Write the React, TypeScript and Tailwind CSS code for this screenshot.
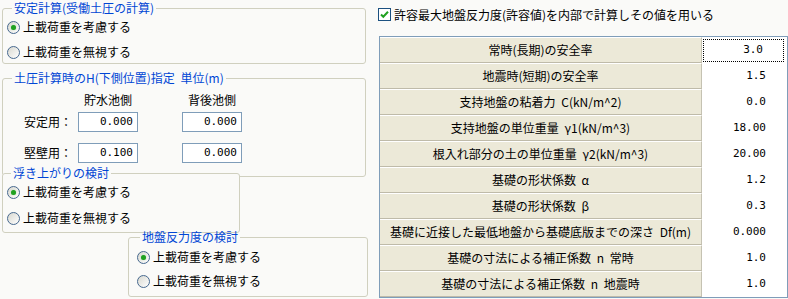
import type { ReactNode } from 'react'
import clsx from 'clsx'

const rows = [
  { label: '常時(長期)の安全率', value: '3.0' },
  { label: '地震時(短期)の安全率', value: '1.5' },
  { label: '支持地盤の粘着力 C(kN/m^2)', value: '0.0' },
  { label: '支持地盤の単位重量 γ1(kN/m^3)', value: '18.00' },
  { label: '根入れ部分の土の単位重量 γ2(kN/m^3)', value: '20.00' },
  { label: '基礎の形状係数 α', value: '1.2' },
  { label: '基礎の形状係数 β', value: '0.3' },
  { label: '基礎に近接した最低地盤から基礎底版までの深さ Df(m)', value: '0.000' },
  { label: '基礎の寸法による補正係数 n 常時', value: '1.0' },
  { label: '基礎の寸法による補正係数 n 地震時', value: '1.0' },
]

function GroupBox({ title, className, legendClass, children }: { title: string; className?: string; legendClass?: string; children: ReactNode }) {
  return (
    <fieldset className={clsx('rounded-[3px] border border-[#d0d0bf] bg-[#fafaf8]', className)}>
      <legend className={clsx('px-[2px] text-[12px] leading-[14px] text-[#0046d5] [word-spacing:3px]', legendClass ?? 'ml-[9px]')}>{title}</legend>
      {children}
    </fieldset>
  )
}

function Radio({ checked, label }: { checked?: boolean; label: string }) {
  return (
    <div className="flex h-[20px] items-center gap-[3px]">
      <span className="flex h-[13px] w-[13px] items-center justify-center rounded-full border border-[#47698f] bg-gradient-to-br from-[#d8d8d0] to-white">
        {checked && <span className="h-[5px] w-[5px] rounded-full bg-[#21a121] shadow-[0_0_1px_#7fd07f]" />}
      </span>
      <span className="leading-[14px]">{label}</span>
    </div>
  )
}

function NumBox({ value }: { value: string }) {
  return (
    <div className="flex h-[20px] w-[60px] items-center justify-end border border-[#7f9db9] bg-white pr-[4px] font-['DejaVu_Sans_Mono',monospace] text-[11px]">
      {value}
    </div>
  )
}

export default function App() {
  return (
    <div className="flex h-[299px] w-[788px] overflow-hidden bg-[#fafaf8] font-['Noto_Sans_CJK_JP',sans-serif] text-[12px] text-black">
      <div className="w-[366px] shrink-0 pl-[2px] pt-[1px]">
        <GroupBox title="安定計算(受働土圧の計算)" className="h-[63px] w-[364px]">
          <div className="flex flex-col gap-[5px] pl-[4px] pt-[2px]">
            <Radio checked label="上載荷重を考慮する" />
            <Radio label="上載荷重を無視する" />
          </div>
        </GroupBox>

        <GroupBox title="土圧計算時のH(下側位置)指定 単位(m)" className="mt-[7px] h-[106px] w-[364px]">
          <div className="pl-[21px] pt-[8px]">
            <div className="flex h-[14px] items-center leading-[14px]">
              <span className="w-[54px]" />
              <span className="w-[60px] text-center">貯水池側</span>
              <span className="w-[44px]" />
              <span className="w-[60px] text-center">背後池側</span>
            </div>
            <div className="mt-[5px] flex items-center">
              <span className="w-[54px]">安定用：</span>
              <NumBox value="0.000" />
              <span className="w-[44px]" />
              <NumBox value="0.000" />
            </div>
            <div className="mt-[11px] flex items-center">
              <span className="w-[54px]">堅壁用：</span>
              <NumBox value="0.100" />
              <span className="w-[44px]" />
              <NumBox value="0.000" />
            </div>
          </div>
        </GroupBox>

        <GroupBox title="浮き上がりの検討" className="relative -mt-[11px] h-[67px] w-[238px]" legendClass="ml-[8px]">
          <div className="flex flex-col gap-[6px] pl-[4px] pt-[2px]">
            <Radio checked label="上載荷重を考慮する" />
            <Radio label="上載荷重を無視する" />
          </div>
        </GroupBox>

        <GroupBox title="地盤反力度の検討" className="relative -mt-[3px] ml-[126px] h-[67px] w-[240px]" legendClass="ml-[11px]">
          <div className="flex flex-col gap-[4px] pl-[8px] pt-[3px]">
            <Radio checked label="上載荷重を考慮する" />
            <Radio label="上載荷重を無視する" />
          </div>
        </GroupBox>
      </div>

      <div className="flex-1">
        <div className="ml-[12px] mt-[8px] flex h-[13px] items-center gap-[3px]">
          <span className="flex h-[13px] w-[13px] items-center justify-center border border-[#1c5180] bg-white">
            <svg width="11" height="11" viewBox="0 0 11 11" aria-hidden="true">
              <path d="M2 5.5 L4.3 7.8 L9 2.8" fill="none" stroke="#21a121" strokeWidth="2" />
            </svg>
          </span>
          <span className="leading-[14px]">許容最大地盤反力度(許容値)を内部で計算しその値を用いる</span>
        </div>

        <div className="ml-[13px] mt-[15px] grid grid-cols-[322px_1fr] border border-[#7f9db9] bg-white">
          {rows.map((row, i) => (
            <div key={row.label} className="contents">
              <div className="flex h-[26px] items-center justify-center border-b border-t border-r border-b-[#bfbba9] border-r-[#c5c2b2] border-t-white bg-[#ece9d8] leading-[14px] [word-spacing:3px]">
                {row.label}
              </div>
              <div className="flex h-[26px] bg-white font-['DejaVu_Sans_Mono',monospace] text-[11px]">
                {i === 0 ? (
                  <div className="mb-[1px] ml-[1px] mr-[3px] mt-[2px] flex flex-1 items-center justify-end border border-dotted border-black pr-[20px]">
                    {row.value}
                  </div>
                ) : (
                  <div className="flex flex-1 items-center justify-end pr-[21px]">{row.value}</div>
                )}
              </div>
            </div>
          ))}
        </div>
      </div>
    </div>
  )
}
